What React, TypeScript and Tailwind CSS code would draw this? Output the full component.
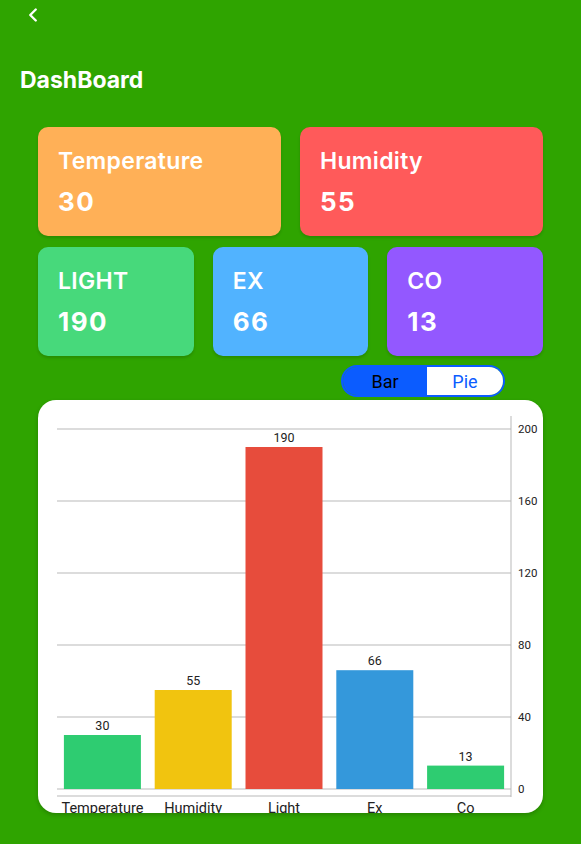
import { ChevronLeft } from "lucide-react";

const stats = [
  { title: "Temperature", value: 30, bg: "bg-[#ffb057]" },
  { title: "Humidity", value: 55, bg: "bg-[#ff5a5a]" },
];

const stats2 = [
  { title: "LIGHT", value: 190, bg: "bg-[#47d97b]" },
  { title: "EX", value: 66, bg: "bg-[#51b3ff]" },
  { title: "CO", value: 13, bg: "bg-[#9358ff]" },
];

const bars = [
  { label: "Temperature", value: 30, color: "#2ecc71" },
  { label: "Humidity", value: 55, color: "#f1c40f" },
  { label: "Light", value: 190, color: "#e74c3c" },
  { label: "Ex", value: 66, color: "#3498db" },
  { label: "Co", value: 13, color: "#2ecc71" },
];

function StatCard({ title, value, bg }: { title: string; value: number; bg: string }) {
  return (
    <div className={`${bg} h-[109px] rounded-[10px] px-[20px] pt-[20px] shadow-[0_2px_3px_rgba(0,0,0,0.15)] flex flex-col`}>
      <span className="text-white text-[23px] leading-[28px] font-semibold tracking-[0.3px]">{title}</span>
      <span className="text-white text-[26px] leading-[30px] font-bold tracking-[1.5px] mt-[12px]">{value}</span>
    </div>
  );
}

function BarChart() {
  const left = 19;
  const right = 473;
  const base = 389;
  const scale = 1.8;
  const band = (right - left) / bars.length;
  const barW = 77;
  const ticks = [0, 40, 80, 120, 160, 200];

  return (
    <svg width="504" height="413" viewBox="0 0 504 413" className="block">
      {ticks.map((t) => {
        const y = base - t * scale;
        return (
          <g key={t}>
            <line x1={left} x2={right} y1={y} y2={y} stroke="#b9b9b9" strokeWidth="1" />
            <text x={480} y={y + 4} fontSize="11.5" fill="#222" fontFamily="Roboto, sans-serif">
              {t}
            </text>
          </g>
        );
      })}
      <line x1={right} x2={right} y1={16} y2={397} stroke="#b9b9b9" strokeWidth="1" />
      <line x1={left} x2={right} y1={396} y2={396} stroke="#b9b9b9" strokeWidth="1" />
      {bars.map((b, i) => {
        const x = left + i * band + (band - barW) / 2;
        const h = b.value * scale;
        const cx = x + barW / 2;
        return (
          <g key={b.label}>
            <rect x={x} y={base - h} width={barW} height={h} fill={b.color} />
            <text x={cx} y={base - h - 5} fontSize="12.5" fill="#222" textAnchor="middle" fontFamily="Roboto, sans-serif">
              {b.value}
            </text>
            <text x={cx} y={413} fontSize="14.5" fill="#222" textAnchor="middle" fontFamily="Roboto, sans-serif">
              {b.label}
            </text>
          </g>
        );
      })}
    </svg>
  );
}

export default function App() {
  return (
    <div className="min-h-[844px] w-full bg-[#2fa400] font-['Inter',sans-serif]">
      <div className="pl-[22px] pt-[4px]">
        <ChevronLeft size={22} strokeWidth={2.6} className="text-white" />
      </div>
      <h1 className="text-white text-[23px] font-bold leading-[28px] pl-[20px] mt-[40px]">DashBoard</h1>

      <div className="px-[38px] mt-[33px]">
        <div className="grid grid-cols-2 gap-[19px]">
          {stats.map((s) => (
            <StatCard key={s.title} {...s} />
          ))}
        </div>
        <div className="grid grid-cols-3 gap-[19px] mt-[11px]">
          {stats2.map((s) => (
            <StatCard key={s.title} {...s} />
          ))}
        </div>

        <div className="flex justify-end pr-[38px] mt-[9px]">
          <div className="flex h-[32px] w-[164px] rounded-full border-2 border-[#0b5cff] overflow-hidden font-['Roboto',sans-serif] text-[18px]">
            <div className="w-[84px] bg-[#0b5cff] text-black flex items-center justify-center">Bar</div>
            <div className="flex-1 bg-white text-[#0b5cff] flex items-center justify-center">Pie</div>
          </div>
        </div>

        <div className="mt-[3px] bg-white rounded-[18px] overflow-hidden h-[413px] shadow-[0_2px_4px_rgba(0,0,0,0.2)]">
          <BarChart />
        </div>
      </div>
    </div>
  );
}
